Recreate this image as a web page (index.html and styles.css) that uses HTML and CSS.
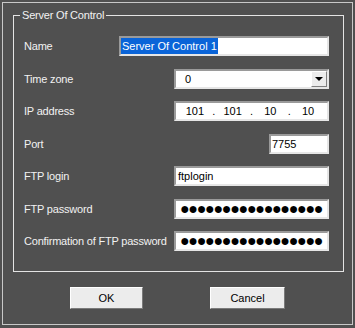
FILE: index.html
```html
<!DOCTYPE html>
<html lang="en">
<head>
    <meta charset="UTF-8">
    <meta name="viewport" content="width=device-width, initial-scale=1.0">
    <title>Server Of Control</title>
    <link rel="stylesheet" href="styles.css">
</head>
<body>

    <div class="window">

        <!-- Group box -->
        <div class="group">
            <span class="legend">Server Of Control</span>

            <div class="form">
                <label class="label">Name</label>
                <div class="field field-name"><span class="selected">Server Of Control 1</span></div>

                <label class="label">Time zone</label>
                <div class="field field-wide select">
                    <span class="select-value">0</span>
                    <span class="drop"><span class="arrow"></span></span>
                </div>

                <label class="label">IP address</label>
                <div class="field field-wide ip">
                    <span class="octet">101</span><span class="dot">.</span>
                    <span class="octet">101</span><span class="dot">.</span>
                    <span class="octet">10</span><span class="dot">.</span>
                    <span class="octet">10</span>
                </div>

                <label class="label">Port</label>
                <div class="field field-port">7755</div>

                <label class="label">FTP login</label>
                <div class="field field-wide">ftplogin</div>

                <label class="label">FTP password</label>
                <div class="field field-wide password">●●●●●●●●●●●●●●●●●</div>

                <label class="label">Confirmation of FTP password</label>
                <div class="field field-wide password">●●●●●●●●●●●●●●●●●</div>
            </div>
        </div>

        <!-- Buttons -->
        <div class="buttons">
            <button class="btn btn-ok">OK</button>
            <button class="btn btn-cancel">Cancel</button>
        </div>

    </div>

</body>
</html>
```

FILE: styles.css
```css
* {
    padding: 0;
    margin: 0;
    box-sizing: border-box;
}

body {
    background-color: #505050;
    font-family: "Liberation Sans", Arial, sans-serif;
    font-size: 11px;
    color: #f2f2f2;
}

/* Outer window frame */
.window {
    margin: 2px;
    width: 351px;
    height: 323px;
    border: 1px solid #c8c8c8;
}

/* Group box */
.group {
    position: relative;
    margin: 12px 0 0 10px;
    width: 331px;
    height: 257px;
    border: 1px solid #e4e4e4;
    padding: 20px 14px 0 10px;
}

.legend {
    position: absolute;
    top: -8px;
    left: 6px;
    padding: 0 2px;
    line-height: 14px;
    background-color: #505050;
    letter-spacing: -0.2px;
}

.form {
    display: grid;
    grid-template-columns: minmax(0, 1fr) auto;
    grid-auto-rows: 20px;
    row-gap: 12.5px;
    align-items: center;
}

.label {
    line-height: 14px;
    white-space: nowrap;
    letter-spacing: -0.2px;
}

/* Sunken edit boxes */
.field {
    justify-self: end;
    height: 20px;
    background-color: #ffffff;
    color: #000000;
    border: 2px solid;
    border-color: #9a9a9a #e6e6e6 #e6e6e6 #9a9a9a;
    padding: 0 2px;
    line-height: 16px;
    white-space: nowrap;
    overflow: hidden;
}

.field-name {
    width: 210px;
    padding: 0;
}

.field-wide {
    width: 155px;
}

.field-port {
    width: 60px;
    padding: 0 1px;
}

.selected {
    display: inline-block;
    background-color: #0a64d8;
    color: #ffffff;
    padding: 0 1px;
    line-height: 16px;
}

/* Combo box */
.select {
    display: flex;
    justify-content: space-between;
    padding: 0 0 0 9px;
}

.drop {
    width: 16px;
    height: 16px;
    background-color: #ececec;
    border: 1px solid;
    border-color: #ffffff #808080 #808080 #ffffff;
    display: flex;
    align-items: center;
    justify-content: center;
}

.arrow {
    width: 0;
    height: 0;
    border-left: 4px solid transparent;
    border-right: 4px solid transparent;
    border-top: 4px solid #000000;
}

/* IP address box */
.ip {
    display: flex;
    padding: 0;
}

.octet {
    flex: 1;
    text-align: center;
}

.dot {
    width: 0;
    display: flex;
    justify-content: center;
}

.password {
    font-size: 16px;
    letter-spacing: -1.3px;
    padding: 0 4px;
    line-height: 15px;
}

/* Buttons */
.buttons {
    display: flex;
    justify-content: space-evenly;
    margin-top: 15px;
}

.btn {
    height: 22px;
    font-family: "Liberation Sans", Arial, sans-serif;
    font-size: 11px;
    color: #000000;
    background-color: #ececec;
    border: 1px solid;
    border-color: #ffffff #7a7a7a #7a7a7a #ffffff;
}

.btn-ok {
    width: 73px;
}

.btn-cancel {
    width: 75px;
}
```
